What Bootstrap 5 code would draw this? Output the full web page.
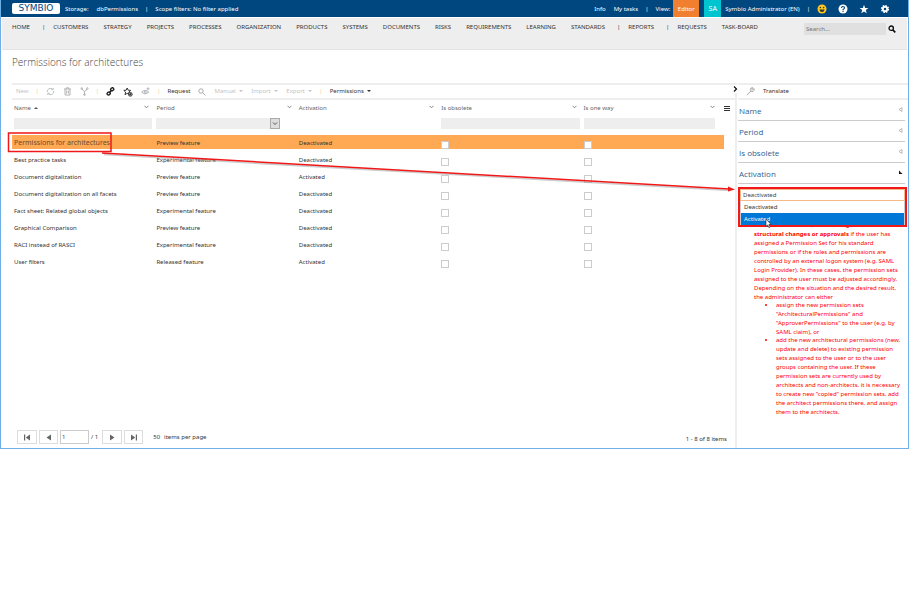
<!DOCTYPE html>
<html lang="en">
<head>
<meta charset="utf-8">
<title>Symbio - Permissions for architectures</title>
<meta name="viewport" content="width=device-width, initial-scale=1">
<link href="https://cdn.jsdelivr.net/npm/bootstrap@5.3.0/dist/css/bootstrap.min.css" rel="stylesheet">
<style>
body{font-family:"Noto Sans","Open Sans",sans-serif;font-size:6px;line-height:9px;color:#333}
a{color:inherit;text-decoration:none}
svg{display:block;flex:none}
button{background:none;border:0;padding:0;color:inherit;line-height:9px}
input,select{font-size:6px;color:#444;border-radius:0}
.window{border:1px solid #6fb1e6;border-top:0;min-height:449px;margin-right:1px}
.topbar{background:#00467f;color:#fff;height:17px;padding:1px 18px 0 11px}
.brand{background:#fff;color:#00467f;font:9px/11px "DejaVu Sans",sans-serif;width:48px;height:11px;border-radius:2px;text-align:center;margin:0 5px 1px 0}
.editor{background:#f17f30;width:26px}
.avatar{background:#00c4cf;font-size:7px;width:17px;text-align:center}
.topbar .tall{line-height:18px;height:17px;margin:-1px 5px 0 3px}
.bar{margin:0 7px}
.icons{gap:11px}
.mainnav{background:#eee;height:32px;margin:1px 1px 0 1px;padding:5px 11px 0 10px;border-bottom:1px solid #e3e3e3}
.mainnav ul{gap:15px}
.mainnav .split{margin:0 -7px 0 -3px}
.search{background:#e0e0e0;border:0;width:82px;height:12px;padding:0 2px;margin-right:2px}
h1{font:300 10px/16px "Open Sans","Noto Sans",sans-serif;color:#444;margin:4px 0 13px 11px}
.toolbar{border-top:2px solid #eee;border-bottom:2px solid #eee;height:17px;padding-left:4px;gap:8px}
.off{color:#c4c4c4}
.rule{color:#f3c69a;margin:0 -1px}
.pane{margin-left:11px;min-width:0}
.caret{width:0;height:0;border:2px solid transparent;border-top-color:currentColor;border-bottom:0;display:inline-block;vertical-align:1px;margin-left:2px}
.caret.up{border-top:0;border-bottom:2px solid #555}
.grid{table-layout:fixed;flex:1;width:100%;border-collapse:separate;border-spacing:0}
.grid th{font-weight:400;color:#666;height:17px;padding:0 2px;vertical-align:middle}
.grid th svg{margin:0 3px 4px 0}
.grid td{height:17px;padding:2px 2px 0;border-bottom:3px solid transparent;background-clip:padding-box;vertical-align:middle}
.grid tr.chosen td{background-color:#ffa954}
.grid tr.chosen td:first-child{font-size:7px;color:#6b4b2d;padding-top:0}
.grid tr.filters td{height:18px;padding:1px 2px 6px;border:0}
.filter{background:#eee;border:0;height:11px;width:100%;display:block}
.filter.short{width:131px}
.pick{width:124px;appearance:none}
.pickwrap svg{margin-left:-10px;border:1px solid #aaa;background:#ddd}
.grid .tick{appearance:none;width:8px;height:8px;border:1px solid #ccc;background:#fff;display:block;margin:4px 0 0}
.gutter{width:11px;padding-top:6px}
.opener{position:absolute;left:-4px;top:2px;background:#fff}
.side{width:173px;flex:none;border-left:2px solid #eee;padding-left:1px;position:relative}
.facets{display:grid;grid-template-rows:repeat(4,1fr);height:84px;margin-right:3px}
.facets button{border-bottom:1px solid #ccc;font:8px/10px "Open Sans","Noto Sans",sans-serif;color:#2d628f;padding:1px 2px 0 1px}
.facets svg{margin-bottom:2px}
.combo{border:2px solid #f01818;margin:3px 1px 0 0;position:relative;z-index:2;background:#fff}
.combo input{border:1px solid #f5b887;height:12px;width:100%;padding:0 2px;display:block}
.combo ul{border:1px solid #ccc;border-width:0 1px;margin:0}
.combo li{height:12px;line-height:12px;padding-left:3px}
.combo li.on{background:#0078d7;color:#fff}
.note{color:#f00;margin:-6px 0 0 16px;white-space:nowrap}
.note ul{margin:0;padding-left:22px}
.note li{margin-top:-1px}
.note p{margin:0}
.pager{padding:0 0 4px 5px}
.pager button{border:1px solid #ddd;width:20px;height:14px;margin-right:2px}
.pager button+button{width:19px}
.pager input{border:1px solid #ccc;width:29px;height:14px;padding:0 1px;margin-right:2px}
.callout{position:absolute;left:0;top:0;z-index:3;pointer-events:none}
</style>
<script src="https://cdn.jsdelivr.net/npm/bootstrap@5.3.0/dist/js/bootstrap.bundle.min.js"></script>
</head>
<body>
<div class="window d-flex flex-column position-relative">
<header class="topbar d-flex align-items-center justify-content-between">
  <div class="d-flex align-items-center">
    <a href="#" class="brand">SYMBIO</a>
    <span>Storage:</span><a href="#" class="ms-2">dbPermissions</a><span class="bar">|</span><a href="#">Scope filters: No filter applied</a>
  </div>
  <div class="d-flex align-items-center">
    <a href="#" class="me-2">Info</a><a href="#">My tasks</a><span class="bar">|</span><span>View:</span>
    <button class="editor tall">Editor</button><a href="#" class="avatar tall ms-0 me-1">SA</a><a href="#">Symbio Administrator (EN)</a><span class="bar">|</span>
    <div class="d-flex align-items-center icons">
    <svg width="10" height="10" viewBox="0 0 10 10"><circle cx="5" cy="5" r="4.500" fill="#ffcb1f"/><circle cx="3.400" cy="3.600" r=".8" fill="#333"/><circle cx="6.600" cy="3.600" r=".8" fill="#333"/><path d="M2.300 5.500h5.400q-.6 2.500-2.700 2.500t-2.700-2.500" fill="#333"/></svg>
    <svg width="10" height="10" viewBox="0 0 10 10"><circle cx="5" cy="5" r="4.500" fill="#fff"/><path d="M3.500 4q0-1.500 1.500-1.500t1.500 1.300q0 .8-.8 1.200-.7.300-.7 1" fill="none" stroke="#00467f" stroke-width="1.100"/><rect x="4.400" y="6.700" width="1.200" height="1.200" fill="#00467f"/></svg>
    <svg width="10" height="10" viewBox="0 0 10 10"><path d="M5 .8l1.100 3.100 3.300.1-2.600 2 .9 3.200L5 7.400 2.300 9.200l.9-3.200L.6 4l3.300-.1z" fill="#fff"/></svg>
    <svg width="10" height="10" viewBox="0 0 10 10"><circle cx="5" cy="5" r="3.500" fill="none" stroke="#fff" stroke-width="1.200" stroke-dasharray="1.500 1.250"/><circle cx="5" cy="5" r="2.200" fill="none" stroke="#fff" stroke-width="1.900"/></svg>
    </div>
  </div>
</header>
<nav class="mainnav d-flex align-items-start justify-content-between">
  <ul class="list-unstyled d-flex mb-0">
    <li><a href="#">HOME</a></li><li class="split">|</li><li><a href="#">CUSTOMERS</a></li><li><a href="#">STRATEGY</a></li><li><a href="#">PROJECTS</a></li><li><a href="#">PROCESSES</a></li><li><a href="#">ORGANIZATION</a></li><li><a href="#">PRODUCTS</a></li><li><a href="#">SYSTEMS</a></li><li><a href="#">DOCUMENTS</a></li><li><a href="#">RISKS</a></li><li><a href="#">REQUIREMENTS</a></li><li><a href="#">LEARNING</a></li><li><a href="#">STANDARDS</a></li><li class="split">|</li><li><a href="#">REPORTS</a></li><li class="split">|</li><li><a href="#">REQUESTS</a></li><li><a href="#">TASK-BOARD</a></li>
  </ul>
  <form class="d-flex align-items-center"><input class="search" type="search" placeholder="Search..." aria-label="Search">
    <button type="button" aria-label="Search"><svg width="8" height="8" viewBox="0 0 8 8" fill="none" stroke="#111"><circle cx="3.200" cy="3.200" r="2.200" stroke-width="1.300"/><path d="M4.800 4.800l2.500 2.500" stroke-width="1.700"/></svg></button></form>
</nav>
<h1>Permissions for architectures</h1>
<div class="d-flex flex-grow-1">
<main class="pane flex-grow-1 d-flex flex-column">
  <div class="toolbar d-flex align-items-center">
    <button class="off" disabled>New</button><span class="rule">|</span>
    <button aria-label="Refresh"><svg width="9" height="9" viewBox="0 0 9 9" fill="none" stroke="#b5bbbd" stroke-width=".9"><path d="M1.200 5a3.300 3.300 0 0 1 5.500-2.800M7.800 4a3.300 3.300 0 0 1-5.500 2.800"/><path d="M5.200 2.800h2V1M3.800 6.200h-2V8"/></svg></button>
    <button aria-label="Delete"><svg width="9" height="9" viewBox="0 0 9 9" fill="none" stroke="#aaa" stroke-width=".9"><path d="M1 2h7M3.300 2V.8h2.400V2M2 2v6h5V2M3.600 3.500v3M5.400 3.500v3"/></svg></button>
    <button aria-label="Merge"><svg width="9" height="9" viewBox="0 0 9 9" fill="none" stroke="#aaa" stroke-width=".9"><path d="M2 2l2.500 2.800L7 2M4.500 4.800v2.700"/><circle cx="1.700" cy="1.500" r=".8"/><circle cx="7.300" cy="1.500" r=".8"/><circle cx="4.500" cy="7.600" r=".8"/></svg></button>
    <span class="rule">|</span>
    <button aria-label="Link"><svg width="9" height="9" viewBox="0 0 9 9" fill="none" stroke="#222" stroke-width="1.400"><rect x="4.600" y="1" width="3.200" height="2.600" rx="1.200" transform="rotate(-40 6.200 2.300)"/><rect x="1.100" y="5.200" width="3.200" height="2.600" rx="1.200" transform="rotate(-40 2.700 6.500)"/><path d="M3.200 5.800l2.500-2.500"/></svg></button>
    <button aria-label="Add favourite"><svg width="10" height="10" viewBox="0 0 10 10" fill="none" stroke="#222" stroke-width=".9"><path d="M4.200 1l1 2.200 2.500.2-1.900 1.700.5 2.600-2.100-1.400-2.200 1.400.6-2.600L.8 3.400l2.400-.2z"/><circle cx="7.300" cy="7.300" r="1.900" fill="#fff"/><path d="M6 7.300h2.600M7.300 6v2.600"/></svg></button>
    <button aria-label="Watch"><svg width="9" height="9" viewBox="0 0 9 9" fill="none" stroke="#aab0b3" stroke-width=".9"><path d="M.7 5.200Q4 1.500 7.800 5.200 4 8.400.7 5.200z"/><circle cx="4.200" cy="5" r="1.100"/><path d="M7 .3v3M5.500 1.800h3"/></svg></button>
    <span class="rule">|</span>
    <button>Request</button>
    <button aria-label="Find"><svg width="8" height="8" viewBox="0 0 8 8" fill="none" stroke="#aaa"><circle cx="3" cy="3" r="2.200"/><path d="M4.600 4.600l2.800 2.800"/></svg></button>
    <button class="off">Manual <i class="caret"></i></button>
    <button class="off">Import <i class="caret"></i></button>
    <button class="off">Export <i class="caret"></i></button>
    <span class="rule">|</span>
    <button>Permissions <i class="caret"></i></button>
  </div>
  <div class="d-flex">
  <table class="grid">
    <thead><tr>
      <th><div class="d-flex align-items-center justify-content-between"><span>Name <i class="caret up"></i></span><svg width="5" height="4" viewBox="0 0 5 4" fill="none" stroke="#777" stroke-width=".9"><path d="M.5.8l2 2 2-2"/></svg></div></th>
      <th><div class="d-flex align-items-center justify-content-between">Period<svg width="5" height="4" viewBox="0 0 5 4" fill="none" stroke="#777" stroke-width=".9"><path d="M.5.8l2 2 2-2"/></svg></div></th>
      <th><div class="d-flex align-items-center justify-content-between">Activation<svg width="5" height="4" viewBox="0 0 5 4" fill="none" stroke="#777" stroke-width=".9"><path d="M.5.8l2 2 2-2"/></svg></div></th>
      <th><div class="d-flex align-items-center justify-content-between">Is obsolete<svg width="5" height="4" viewBox="0 0 5 4" fill="none" stroke="#777" stroke-width=".9"><path d="M.5.8l2 2 2-2"/></svg></div></th>
      <th><div class="d-flex align-items-center justify-content-between pe-1">Is one way<svg width="5" height="4" viewBox="0 0 5 4" fill="none" stroke="#777" stroke-width=".9"><path d="M.5.8l2 2 2-2"/></svg></div></th>
    </tr></thead>
    <tbody>
    <tr class="filters"><td><input class="filter" aria-label="Filter name"></td><td><div class="pickwrap d-flex"><select class="filter pick" aria-label="Filter period"><option></option></select><svg width="10" height="11" viewBox="0 0 8 9" fill="none" stroke="#444" stroke-width=".9"><path d="M2 3.500l2 2 2-2"/></svg></div></td><td></td><td><input class="filter" aria-label="Filter obsolete"></td><td><input class="filter short" aria-label="Filter one way"></td></tr>
    <tr class="chosen"><td>Permissions for architectures</td><td>Preview feature</td><td>Deactivated</td><td><input class="tick" type="checkbox" aria-label="Is obsolete"></td><td><input class="tick" type="checkbox" aria-label="Is one way"></td></tr>
    <tr><td>Best practice tasks</td><td>Experimental feature</td><td>Deactivated</td><td><input class="tick" type="checkbox" aria-label="Is obsolete"></td><td><input class="tick" type="checkbox" aria-label="Is one way"></td></tr>
    <tr><td>Document digitalization</td><td>Preview feature</td><td>Activated</td><td><input class="tick" type="checkbox" aria-label="Is obsolete"></td><td><input class="tick" type="checkbox" aria-label="Is one way"></td></tr>
    <tr><td>Document digitalization on all facets</td><td>Preview feature</td><td>Deactivated</td><td><input class="tick" type="checkbox" aria-label="Is obsolete"></td><td><input class="tick" type="checkbox" aria-label="Is one way"></td></tr>
    <tr><td>Fact sheet: Related global objects</td><td>Experimental feature</td><td>Deactivated</td><td><input class="tick" type="checkbox" aria-label="Is obsolete"></td><td><input class="tick" type="checkbox" aria-label="Is one way"></td></tr>
    <tr><td>Graphical Comparison</td><td>Preview feature</td><td>Deactivated</td><td><input class="tick" type="checkbox" aria-label="Is obsolete"></td><td><input class="tick" type="checkbox" aria-label="Is one way"></td></tr>
    <tr><td>RACI instead of RASCI</td><td>Experimental feature</td><td>Deactivated</td><td><input class="tick" type="checkbox" aria-label="Is obsolete"></td><td><input class="tick" type="checkbox" aria-label="Is one way"></td></tr>
    <tr><td>User filters</td><td>Released feature</td><td>Activated</td><td><input class="tick" type="checkbox" aria-label="Is obsolete"></td><td><input class="tick" type="checkbox" aria-label="Is one way"></td></tr>
    </tbody>
  </table>
  <div class="gutter"><button class="d-block" aria-label="Columns"><svg width="7" height="6" viewBox="0 0 7 6" stroke="#333"><path d="M0 .5h6M0 2.500h6M0 4.500h6"/></svg></button></div>
  </div>
  <div class="pager d-flex align-items-center mt-auto">
    <button aria-label="First page"><svg class="mx-auto" width="8" height="7" viewBox="0 0 8 7" fill="#666"><path d="M1 .5h1.200v6H1zM7 .5v6L2.800 3.500z"/></svg></button>
    <button aria-label="Previous page"><svg class="mx-auto" width="8" height="7" viewBox="0 0 8 7" fill="#666"><path d="M6 .5v6L1.500 3.500z"/></svg></button>
    <input value="1" aria-label="Page"><span class="me-1">/ 1</span>
    <button aria-label="Next page"><svg class="mx-auto" width="8" height="7" viewBox="0 0 8 7" fill="#666"><path d="M2 .5v6l4.500-3z"/></svg></button>
    <button aria-label="Last page"><svg class="mx-auto" width="8" height="7" viewBox="0 0 8 7" fill="#666"><path d="M5.800.5H7v6H5.800zM1 .5v6l4.200-3z"/></svg></button>
    <span class="ms-2 me-1">50</span><span>items per page</span>
    <span class="ms-auto me-2 pt-1">1 - 8 of 8 items</span>
  </div>
</main>
<aside class="side">
  <button class="opener" aria-label="Collapse panel"><svg width="5" height="8" viewBox="0 0 5 8" fill="none" stroke="#111" stroke-width="1.200"><path d="M1 1.500L3.500 4 1 6.500"/></svg></button>
  <div class="toolbar d-flex align-items-center ps-2">
    <button aria-label="Settings"><svg width="9" height="9" viewBox="0 0 9 9" fill="none" stroke="#aaa"><path d="M.8 8L5 4M8 1.500L6.600 3 5.500 2 7 .8Q4.500.3 4.200 2.500 4.600 5 7 4.500 8.500 3.800 8 1.500"/></svg></button>
    <button>Translate</button>
  </div>
  <div class="facets">
    <button class="d-flex align-items-center justify-content-between">Name<svg width="5" height="5" viewBox="0 0 5 5" fill="none" stroke="#aaa" stroke-width=".8"><path d="M4 .5v4L1 2.500z"/></svg></button>
    <button class="d-flex align-items-center justify-content-between">Period<svg width="5" height="5" viewBox="0 0 5 5" fill="none" stroke="#aaa" stroke-width=".8"><path d="M4 .5v4L1 2.500z"/></svg></button>
    <button class="d-flex align-items-center justify-content-between">Is obsolete<svg width="5" height="5" viewBox="0 0 5 5" fill="none" stroke="#aaa" stroke-width=".8"><path d="M4 .5v4L1 2.500z"/></svg></button>
    <button class="d-flex align-items-center justify-content-between">Activation<svg width="5" height="5" viewBox="0 0 5 5" fill="#111"><path d="M1 .5l3.500 3.500H1z"/></svg></button>
  </div>
  <div class="combo">
    <input value="Deactivated" aria-label="Activation">
    <ul class="list-unstyled" role="listbox"><li role="option">Deactivated</li><li class="on" role="option">Activated</li></ul>
  </div>
  <div class="note">
    <p><b>for "administrator", it is no longer able to make<br>structural changes or approvals</b> if the user has<br>assigned a Permission Set for his standard<br>permissions or if the roles and permissions are<br>controlled by an external logon system (e.g. SAML<br>Login Provider). In these cases, the permission sets<br>assigned to the user must be adjusted accordingly.<br>Depending on the situation and the desired result,<br>the administrator can either</p>
    <ul><li>assign the new permission sets<br>"ArchitecturalPermissions" and<br>"ApproverPermissions" to the user (e.g. by<br>SAML claim), or</li>
    <li>add the new architectural permissions (new,<br>update and delete) to existing permission<br>sets assigned to the user or to the user<br>groups containing the user. If these<br>permission sets are currently used by<br>architects and non-architects, it is necessary<br>to create new "copied" permission sets, add<br>the architect permissions there, and assign<br>them to the architects.</li></ul>
  </div>
</aside>
</div>
<svg class="callout" width="908" height="230" viewBox="1 0 908 230">
  <path d="M104 154.500L730 190.500" fill="none" stroke="#999" stroke-opacity=".5" stroke-width="1.500"/>
  <g fill="none" stroke="#f01818" stroke-width="1.500"><rect x="8.500" y="133" width="102.500" height="18.500"/><path d="M102 153L729 189"/></g>
  <path d="M728 186.500l7 3-7 2z" fill="#f01818"/>
  <path d="M766 219v7.500l1.700-1.500 1.200 2.700 1.200-.6-1.200-2.600h2.200z" fill="#fff" stroke="#222" stroke-width=".6"/>
</svg>
</div>
</body>
</html>
